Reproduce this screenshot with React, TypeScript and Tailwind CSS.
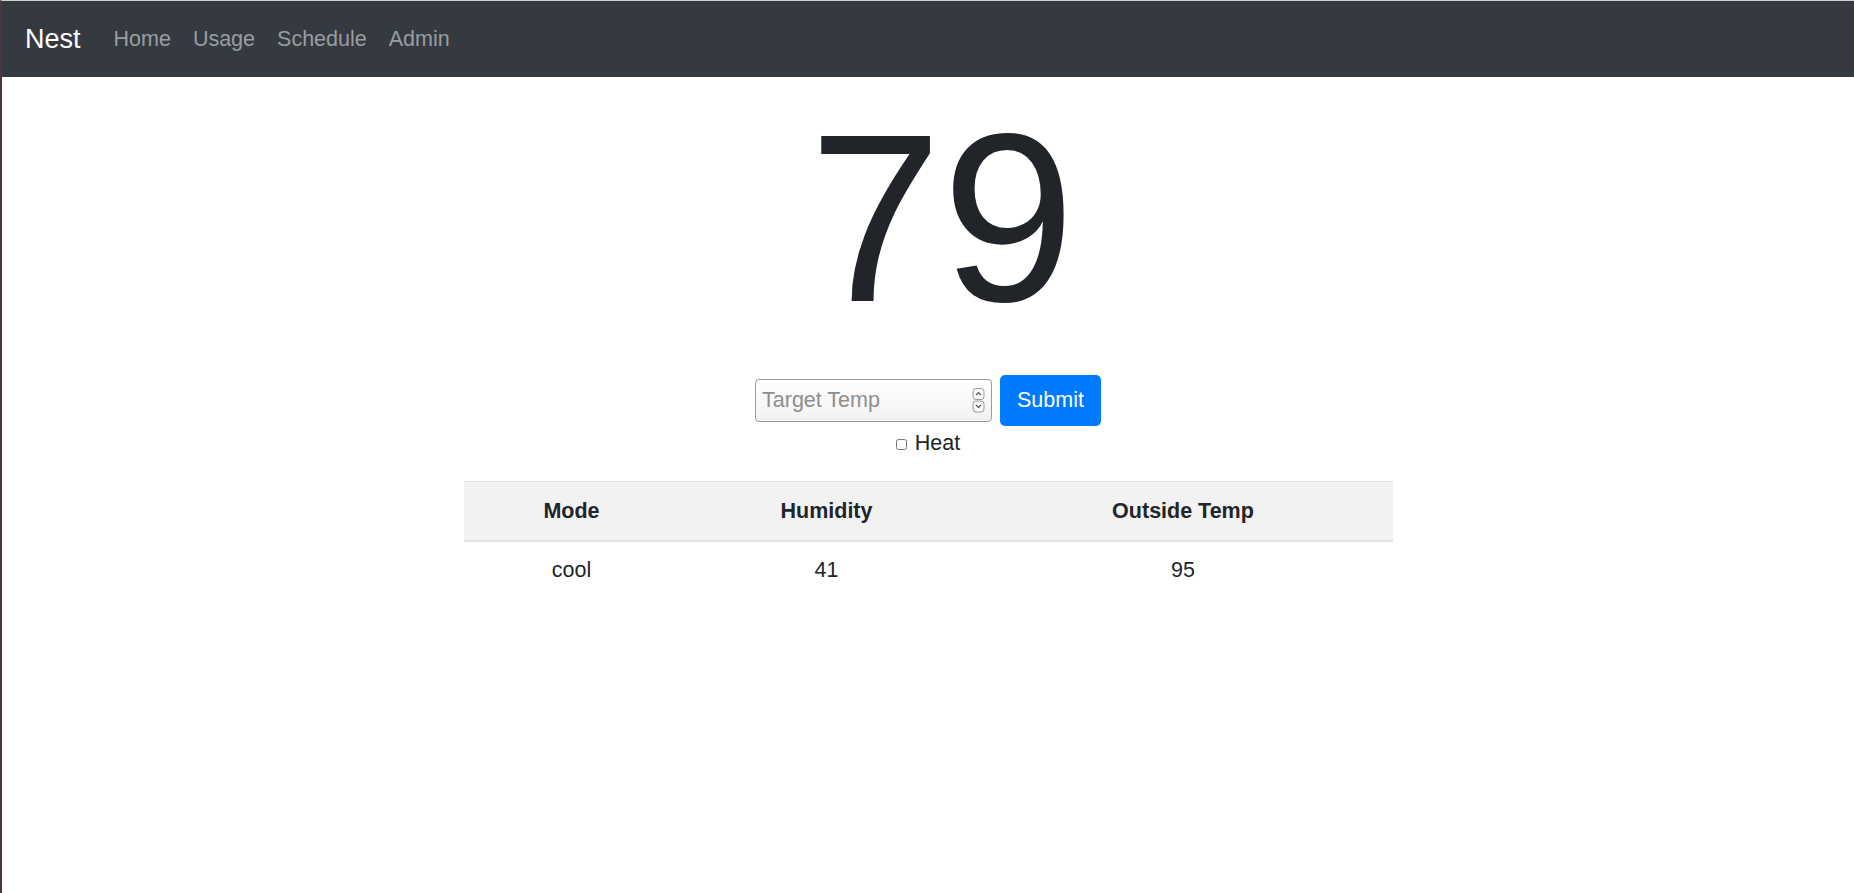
import React from 'react';

const Spinner = () => (
  <svg width="14" height="25" viewBox="0 0 14 25" className="absolute right-[6px] top-[9px]">
    <rect x="1" y="0.5" width="11" height="11" rx="3" fill="#fafafa" stroke="#9a9a9a" strokeWidth="1" />
    <polyline points="4,7 6.5,4.5 9,7" fill="none" stroke="#555" strokeWidth="1.2" />
    <rect x="1" y="13" width="11" height="11" rx="3" fill="#fafafa" stroke="#9a9a9a" strokeWidth="1" />
    <polyline points="4,17 6.5,19.5 9,17" fill="none" stroke="#555" strokeWidth="1.2" />
  </svg>
);

const App = () => {
  const links = ["Home", "Usage", "Schedule", "Admin"];
  const rows = [{ mode: "cool", humidity: "41", outside: "95" }];

  return (
    <div
      className="min-h-screen bg-white border-t border-t-[#cfcfcf] border-l-2 border-l-[#4a383d] text-[#212529]"
      style={{ fontFamily: '"Liberation Sans", Arial, sans-serif' }}
    >
      {/* Navbar */}
      <nav className="h-[76px] bg-[#343a40] flex items-center pl-[23px]">
        <span className="text-[27px] text-white mr-[22px]">Nest</span>
        <div className="flex items-center">
          {links.map((link) => (
            <span key={link} className="text-[21.5px] text-[#9a9da0] px-[11px]">
              {link}
            </span>
          ))}
        </div>
      </nav>

      {/* Current temp */}
      <div className="flex justify-center mt-[22px] pl-[28px]">
        <span className="text-[239px] leading-none">79</span>
      </div>

      {/* Form */}
      <div className="flex justify-center items-center gap-[8px] mt-[37px]">
        <div className="relative">
          <input
            type="text"
            placeholder="Target Temp"
            className="w-[237px] h-[43px] border border-[#9c9c9c] rounded-[4px] bg-linear-to-b from-white to-[#f2f2f2] pl-[6px] text-[21.5px] placeholder:text-[#8e8e8e] outline-none"
          />
          <Spinner />
        </div>
        <button className="h-[51px] px-[17px] bg-[#007bff] text-white text-[21.5px] rounded-[5px]">
          Submit
        </button>
      </div>
      <div className="flex justify-center items-center mt-[5px] h-[24px]">
        <input type="checkbox" className="w-[11px] h-[11px] mr-[8px] mt-[2px]" />
        <span className="text-[21.5px]">Heat</span>
      </div>

      {/* Table */}
      <div className="flex justify-center mt-[26px]">
        <table className="w-[929px] border-collapse text-[21.5px]">
          <colgroup>
            <col className="w-[216px]" />
            <col className="w-[294px]" />
            <col className="w-[419px]" />
          </colgroup>
          <thead>
            <tr className="bg-[#f2f2f2] h-[59px] border-t border-b-2 border-[#dee2e6]">
              <th className="font-bold text-center align-middle">Mode</th>
              <th className="font-bold text-center align-middle">Humidity</th>
              <th className="font-bold text-center align-middle">Outside Temp</th>
            </tr>
          </thead>
          <tbody>
            {rows.map((row, index) => (
              <tr key={index} className="h-[59px]">
                <td className="text-center align-middle">{row.mode}</td>
                <td className="text-center align-middle">{row.humidity}</td>
                <td className="text-center align-middle">{row.outside}</td>
              </tr>
            ))}
          </tbody>
        </table>
      </div>
    </div>
  );
};

export default App;
